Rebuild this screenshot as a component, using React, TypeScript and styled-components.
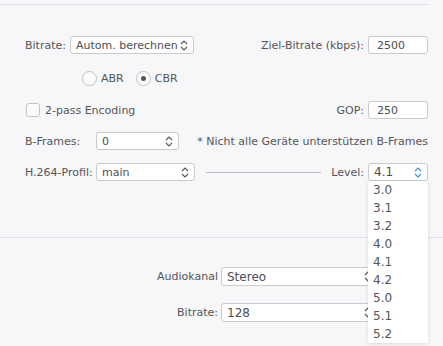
import { createGlobalStyle, styled } from 'styled-components';

const GlobalStyle = createGlobalStyle`
  html, body { margin: 0; padding: 0; background: #f7f7f9; }
  * { box-sizing: border-box; }
`

const Page = styled.div`
  width: 443px;
  height: 346px;
  overflow: hidden;
  background: #f7f7f9;
  padding-top: 4px;
  font-family: "DejaVu Sans", sans-serif;
  font-size: 11px;
  color: #555558;
`

const Rule = styled.div<{ $right: number; $top?: number }>`
  height: 1px;
  background: #e1e1e5;
  margin-right: ${p => p.$right}px;
  margin-top: ${p => p.$top ?? 0}px;
`

const Form = styled.div`
  display: flex;
  flex-direction: column;
  padding: 0 15px 0 25px;
`

const Row = styled.div<{ $top: number; $indent?: number }>`
  display: flex;
  align-items: center;
  height: 18px;
  margin-top: ${p => p.$top}px;
  padding-left: ${p => p.$indent ?? 0}px;
`

const Group = styled.div`
  display: flex;
  align-items: center;
  gap: 4px;
`

const Spacer = styled.div`
  flex: 1;
`

const Label = styled.span<{ $width?: number }>`
  white-space: nowrap;
  width: ${p => (p.$width ? `${p.$width}px` : 'auto')};
  flex-shrink: 0;
`

const Box = styled.div<{ $width: number; $height?: number; $big?: boolean }>`
  position: relative;
  display: flex;
  align-items: center;
  justify-content: space-between;
  width: ${p => p.$width}px;
  height: ${p => p.$height ?? 18}px;
  padding: 0 5px 0 5px;
  background: #fff;
  border: 1px solid #cacace;
  border-radius: 3px;
  font-size: ${p => (p.$big ? 12 : 11)}px;
  color: #4e4e52;
  white-space: nowrap;
`

const InputBox = styled(Box)`
  padding-left: 8px;
`

const Radio = styled.span<{ $on?: boolean }>`
  width: 15px;
  height: 15px;
  border-radius: 50%;
  border: 1px solid #c3c3c7;
  background: #fbfbfc;
  display: flex;
  align-items: center;
  justify-content: center;
  margin-right: 4px;
  &::after {
    content: "";
    display: ${p => (p.$on ? 'block' : 'none')};
    width: 5px;
    height: 5px;
    border-radius: 50%;
    background: #555;
  }
`

const RadioLabel = styled.span`
  margin-right: 12px;
`

const Check = styled.span`
  width: 14px;
  height: 14px;
  border: 1px solid #c3c3c7;
  border-radius: 3px;
  background: #fbfbfc;
  margin: 0 5px 0 1px;
`

const Line = styled.div`
  flex: 1;
  height: 1px;
  background: #b9b9bd;
  margin: 0 10px 0 11px;
`

const Note = styled.span`
  margin-left: 18px;
  white-space: nowrap;
`

const Menu = styled.div`
  position: absolute;
  top: 17px;
  left: -1px;
  width: 60px;
  background: #fff;
  box-shadow: 0 1px 4px rgba(0, 0, 0, 0.12);
  z-index: 2;
`

const MenuItem = styled.div`
  height: 18px;
  line-height: 18px;
  padding-left: 5px;
  font-size: 12px;
  color: #55555a;
`

const Audio = styled.div`
  display: grid;
  grid-template-columns: 218px 157px;
  column-gap: 3px;
  row-gap: 17px;
  align-items: center;
  margin-top: 29px;
`

const AudioLabel = styled.span`
  text-align: right;
`

const Chevron = ({ color = '#5a5a5e' }: { color?: string }) => (
  <svg width="8" height="11" viewBox="0 0 8 11" fill="none" stroke={color} strokeWidth="1.2">
    <path d="M1 4 L4 1 L7 4" />
    <path d="M1 7 L4 10 L7 7" />
  </svg>
)

const levels = ['3.0', '3.1', '3.2', '4.0', '4.1', '4.2', '5.0', '5.1', '5.2']

export default function App() {
  return (
    <Page>
      <GlobalStyle />
      <Rule $right={15} />
      <Form>
        <Row $top={31}>
          <Group>
            <Label>Bitrate:</Label>
            <Box $width={124}>
              Autom. berechnen
              <Chevron />
            </Box>
          </Group>
          <Spacer />
          <Group>
            <Label>Ziel-Bitrate (kbps):</Label>
            <InputBox $width={60}>2500</InputBox>
          </Group>
        </Row>
        <Row $top={15} $indent={57}>
          <Radio />
          <RadioLabel>ABR</RadioLabel>
          <Radio $on />
          <RadioLabel>CBR</RadioLabel>
        </Row>
        <Row $top={14}>
          <Check />
          <Label>2-pass Encoding</Label>
          <Spacer />
          <Group>
            <Label>GOP:</Label>
            <InputBox $width={60}>250</InputBox>
          </Group>
        </Row>
        <Row $top={13}>
          <Label $width={71}>B-Frames:</Label>
          <Box $width={86}>
            0
            <Chevron />
          </Box>
          <Note>* Nicht alle Geräte unterstützen B-Frames</Note>
        </Row>
        <Row $top={13}>
          <Label $width={71}>H.264-Profil:</Label>
          <Box $width={99}>
            main
            <Chevron />
          </Box>
          <Line />
          <Group>
            <Label>Level:</Label>
            <Box $width={60} $big>
              4.1
              <Chevron color="#3d8fd6" />
              <Menu>
                {levels.map(l => (
                  <MenuItem key={l}>{l}</MenuItem>
                ))}
              </Menu>
            </Box>
          </Group>
        </Row>
      </Form>
      <Rule $right={0} $top={56} />
      <Audio>
        <AudioLabel>Audiokanal</AudioLabel>
        <Box $width={157} $height={19} $big>
          Stereo
          <Chevron />
        </Box>
        <AudioLabel>Bitrate:</AudioLabel>
        <Box $width={157} $height={19} $big>
          128
          <Chevron />
        </Box>
      </Audio>
    </Page>
  )
}
